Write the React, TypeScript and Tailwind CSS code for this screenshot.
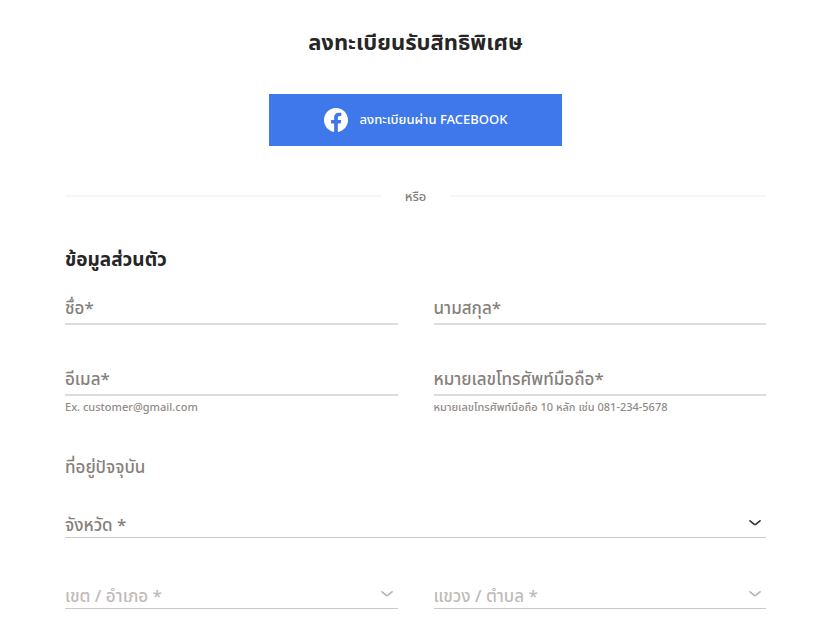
import React, { useState } from 'react';

const inputClass =
  'block w-full h-[34px] border-b-2 border-[#dcdcdc] bg-transparent text-[17px] leading-8 text-[#867f7b] placeholder:leading-8 placeholder:text-[#867f7b] placeholder:opacity-100 outline-none focus:border-[#3f78ea]';

interface TextFieldProps {
  id: string;
  label: string;
  type?: string;
  hint?: string;
}

const TextField: React.FC<TextFieldProps> = ({ id, label, type = 'text', hint }) => {
  const [value, setValue] = useState('');

  return (
    <div>
      <input
        id={id}
        type={type}
        value={value}
        aria-label={label}
        placeholder={label}
        onChange={(e) => setValue(e.target.value)}
        className={inputClass}
      />
      {hint && <p className="mt-[3px] text-[11px] leading-4 text-[#918b88]">{hint}</p>}
    </div>
  );
};

interface SelectFieldProps {
  id: string;
  label: string;
  disabled?: boolean;
}

const SelectField: React.FC<SelectFieldProps> = ({ id, label, disabled }) => (
  <div className="relative">
    <select
      id={id}
      aria-label={label}
      disabled={disabled}
      className="block w-full h-[26px] appearance-none border-b border-[#c9c9c9] bg-transparent pr-8 text-[17px] leading-6 text-[#867f7b] outline-none disabled:text-[#bfbbb9] disabled:opacity-100"
    >
      <option>{label}</option>
    </select>
    <svg
      viewBox="0 0 12 8"
      className={`pointer-events-none absolute right-[5px] top-[7px] h-2 w-3 ${disabled ? 'text-[#b5b5b5]' : 'text-[#333333]'}`}
      fill="none"
      stroke="currentColor"
      strokeWidth="1.7"
      strokeLinecap="round"
      strokeLinejoin="round"
      aria-hidden="true"
    >
      <path d="M1 1.8 5 5.1Q6 5.9 7 5.1L11 1.8" />
    </svg>
  </div>
);

const App: React.FC = () => {
  return (
    <div className="min-h-screen bg-white font-['Noto_Sans','Noto_Sans_Thai',sans-serif] font-medium">
      <main className="pt-[27px] pb-7 pl-[65px] pr-[59px]">
        <h1 className="text-center text-[22px] leading-7 font-bold text-[#272525]">ลงทะเบียนรับสิทธิพิเศษ</h1>

        <button
          type="button"
          className="mx-auto mt-[39px] flex h-[52px] w-[293px] items-center justify-center gap-3 bg-[#3f78ea] text-[13px] text-white"
        >
          <svg viewBox="0 0 24 24" className="size-6" fill="currentColor" aria-hidden="true">
            <path d="M24 12.07C24 5.4 18.63 0 12 0S0 5.4 0 12.07C0 18.1 4.39 23.1 10.13 24v-8.44H7.08v-3.49h3.05V9.41c0-3.02 1.79-4.69 4.53-4.69 1.31 0 2.68.24 2.68.24v2.97h-1.51c-1.49 0-1.96.93-1.96 1.89v2.25h3.33l-.53 3.49h-2.8V24C19.61 23.1 24 18.1 24 12.07z" />
          </svg>
          ลงทะเบียนผ่าน FACEBOOK
        </button>

        <div className="mt-10 flex items-center gap-6 text-[13px] leading-5 text-[#867f7b]">
          <span className="h-0.5 flex-1 bg-[#f5f5f5]" />
          หรือ
          <span className="h-0.5 flex-1 bg-[#f5f5f5]" />
        </div>

        <form>
          <h2 className="mt-[39px] text-[19px] leading-7 font-bold text-[#272525]">ข้อมูลส่วนตัว</h2>
          <div className="mt-[18px] grid grid-cols-2 gap-x-9 gap-y-[37px]">
            <TextField id="firstName" label="ชื่อ*" />
            <TextField id="lastName" label="นามสกุล*" />
            <TextField id="email" label="อีเมล*" type="email" hint="Ex. customer@gmail.com" />
            <TextField id="phone" label="หมายเลขโทรศัพท์มือถือ*" type="tel" hint="หมายเลขโทรศัพท์มือถือ 10 หลัก เช่น 081-234-5678" />
          </div>

          <h3 className="mt-10 text-[17px] leading-6 text-[#867f7b]">ที่อยู่ปัจจุบัน</h3>
          <div className="mt-[33px] grid grid-cols-2 gap-x-9 gap-y-[45px]">
            <div className="col-span-2">
              <SelectField id="province" label="จังหวัด *" />
            </div>
            <SelectField id="district" label="เขต / อำเภอ *" disabled />
            <SelectField id="subdistrict" label="แขวง / ตำบล *" disabled />
          </div>
        </form>
      </main>
    </div>
  );
};

export default App;
